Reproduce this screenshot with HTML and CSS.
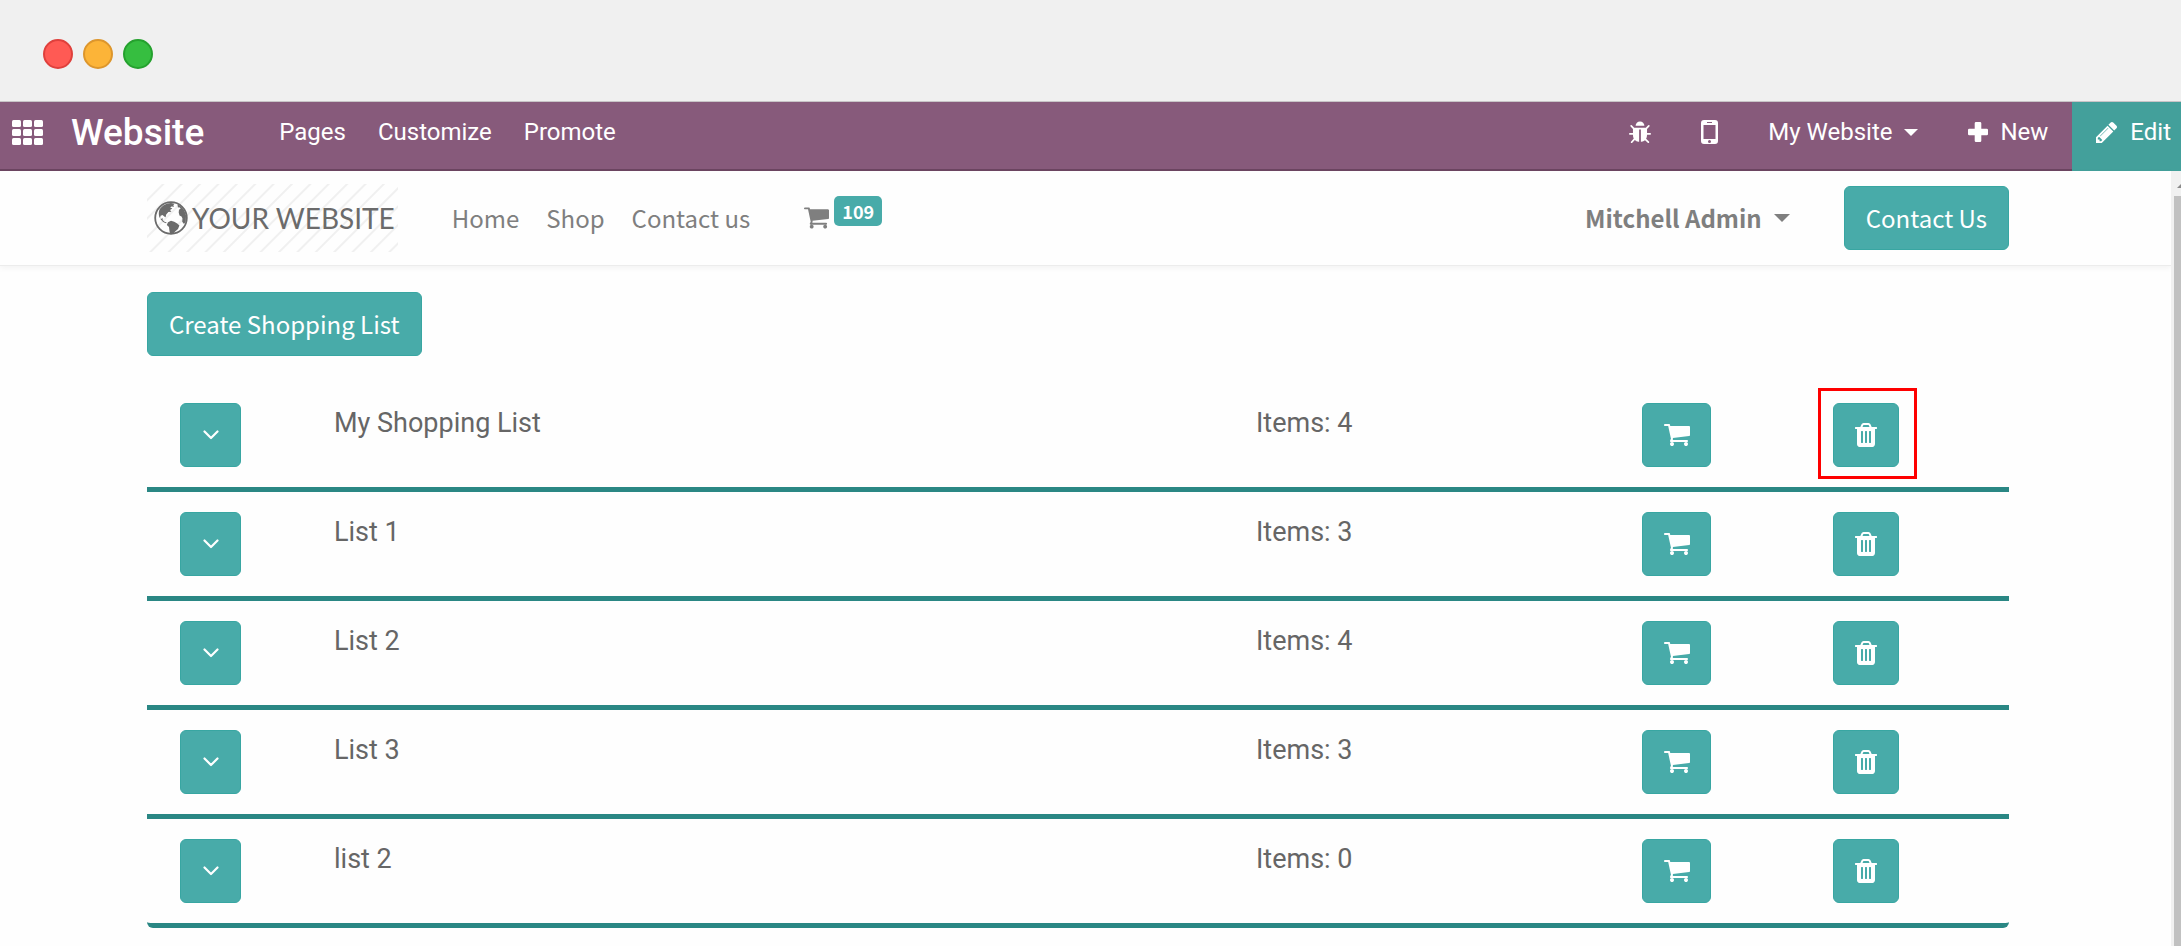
FILE: index.html
```
<!DOCTYPE html>
<html lang="en">
<head>
<meta charset="utf-8">
<title>Shopping Lists | Your Website</title>
<link rel="stylesheet" href="styles.css">
</head>
<body>
<svg class="sprite" aria-hidden="true">
  <symbol id="cart" viewBox="64 256 1664 1408"><path d="M704 1536q0 52-38 90t-90 38-90-38-38-90 38-90 90-38 90 38 38 90zm896 0q0 52-38 90t-90 38-90-38-38-90 38-90 90-38 90 38 38 90zm128-1088v512q0 24-16.5 42.5t-40.5 21.5l-1044 122q13 60 13 70 0 16-24 64h920q26 0 45 19t19 45-19 45-45 19h-1024q-26 0-45-19t-19-45q0-11 8-31.5t16-36 21.5-40 15.5-29.5l-177-823h-204q-26 0-45-19t-19-45 19-45 45-19h256q16 0 28.5 6.5t19.5 15.5 13 24.5 8 26 5.5 29.5 4.5 26h1201q26 0 45 19t19 45z"/></symbol>
  <symbol id="trash" viewBox="192 128 1408 1536"><path d="M704 1376v-704q0-14-9-23t-23-9h-64q-14 0-23 9t-9 23v704q0 14 9 23t23 9h64q14 0 23-9t9-23zm256 0v-704q0-14-9-23t-23-9h-64q-14 0-23 9t-9 23v704q0 14 9 23t23 9h64q14 0 23-9t9-23zm256 0v-704q0-14-9-23t-23-9h-64q-14 0-23 9t-9 23v704q0 14 9 23t23 9h64q14 0 23-9t9-23zm-544-992h448l-48-117q-7-9-17-11h-317q-10 2-17 11zm928 32v64q0 14-9 23t-23 9h-96v948q0 83-47 143.5t-113 60.5h-832q-66 0-113-58.5t-47-141.5v-952h-96q-14 0-23-9t-9-23v-64q0-14 9-23t23-9h309l70-167q15-37 54-63t79-26h320q40 0 79 26t54 63l70 167h309q14 0 23 9t9 23z"/></symbol>
  <symbol id="chevron" viewBox="0 0 16 10"><path d="M1.500 1.500L8 8l6.500-6.500" fill="none" stroke="currentColor" stroke-width="2.200" stroke-linecap="round" stroke-linejoin="round"/></symbol>
  <symbol id="caret" viewBox="0 0 16 8"><path d="M0 0h16L8 8z"/></symbol>
</svg>

<div class="titlebar">
  <span class="dot dot-close"></span>
  <span class="dot dot-min"></span>
  <span class="dot dot-max"></span>
</div>

<nav class="topbar" aria-label="Editor">
  <a class="apps" href="#" aria-label="Applications">
    <svg width="31" height="25" viewBox="0 0 31 25"><g fill="currentColor"><rect width="9" height="7" rx="1.500"/><rect x="11" width="9" height="7" rx="1.500"/><rect x="22" width="9" height="7" rx="1.500"/><rect y="9" width="9" height="7" rx="1.500"/><rect x="11" y="9" width="9" height="7" rx="1.500"/><rect x="22" y="9" width="9" height="7" rx="1.500"/><rect y="18" width="9" height="7" rx="1.500"/><rect x="11" y="18" width="9" height="7" rx="1.500"/><rect x="22" y="18" width="9" height="7" rx="1.500"/></g></svg>
  </a>
  <a class="app-name" href="#">Website</a>
  <div class="menu">
    <button type="button">Pages</button>
    <button type="button">Customize</button>
    <button type="button">Promote</button>
  </div>
  <div class="tools">
    <button type="button" aria-label="Debug"><svg width="22" height="23" viewBox="96 32 1600 1664" preserveAspectRatio="none"><path d="M1696 960q0 26-19 45t-45 19h-224q0 171-67 290l208 209q19 19 19 45t-19 45q-18 19-45 19t-45-19l-198-197q-5 5-15 13t-42 28.500-65 36.500-82 29-97 13v-896h-128v896q-51 0-101.500-13.500t-87-33-66-39-43.500-32.500l-15-14-183 207q-20 21-48 21-24 0-43-16-19-18-20.500-44.500t15.500-46.500l202-227q-58-114-58-274h-224q-26 0-45-19t-19-45 19-45 45-19h224v-294l-173-173q-19-19-19-45t19-45 45-19 45 19l173 173h844l173-173q19-19 45-19t45 19 19 45-19 45l-173 173v294h224q26 0 45 19t19 45zm-480-576h-640q0-133 93.500-226.500t226.500-93.500 226.500 93.500 93.500 226.500z"/></svg></button>
    <button type="button" aria-label="Mobile preview"><svg width="17" height="24" viewBox="0 0 17 24"><path fill-rule="evenodd" d="M3 0h11a3 3 0 0 1 3 3v18a3 3 0 0 1-3 3H3a3 3 0 0 1-3-3V3a3 3 0 0 1 3-3zM2.500 5v14h12V5zM6 2v1h5V2zM8.500 20a1.500 1.500 0 1 0 0 3 1.500 1.500 0 0 0 0-3z"/></svg></button>
    <button type="button">My Website<svg class="caret" width="14" height="7"><use href="#caret"/></svg></button>
    <button type="button" class="new"><svg width="20" height="20" viewBox="0 0 20 20"><path d="M8 0h4q1.300 0 1.300 1.300v5.400h5.400q1.300 0 1.300 1.300v4q0 1.300-1.300 1.300h-5.400v5.400q0 1.300-1.300 1.300H8q-1.300 0-1.300-1.300v-5.400H1.300Q0 13.300 0 12V8q0-1.300 1.300-1.300h5.400V1.300Q6.700 0 8 0z"/></svg>New</button>
  </div>
  <button type="button" class="edit"><svg width="21" height="21" viewBox="128 149 1515 1515"><path d="M491 1536l91-91-235-235-91 91v107h128v128h107zm523-928q0-22-22-22-10 0-17 7l-542 542q-7 7-7 17 0 22 22 22 10 0 17-7l542-542q7-7 7-17zm-54-192l416 416-832 832h-416v-416zm683 96q0 53-37 90l-166 166-416-416 166-165q36-38 90-38 53 0 91 38l235 234q37 39 37 91z"/></svg>Edit</button>
</nav>

<div class="viewport">
  <div class="page">
    <header class="site-header">
      <a class="logo" href="#">
        <svg width="34" height="34" viewBox="0 0 34 34"><circle cx="17" cy="17" r="15.800" fill="none" stroke="currentColor" stroke-width="1.800"/><path d="M5.500 8.500C8.500 4 12.500 2.300 17 2l3.500.8-1.200 1.400.8 1.600-2.600-.4-1.300 1 2.200 1.200-2.400 1.500 1.400 1.600-3 .4-2.200 2.500-.6 2.600-1.400-.8-1.600-1.300-2 .7-.6 2.700 1.600.2.900-1 .2 2.500 2.200 1.700 1.600.4-.4.900C8.500 21.500 6.500 18 5.300 16c-.6-2.500-.8-5 .2-7.500z"/><path d="M14 21.200l3-1.400 3.200 1 3 1.700 2.200 2-1.400 3.500-2.600 2.200-1.900 2-3.500.4-.6-3.200-.4-3.300-2.200-2.200z"/><path d="M23.500 3.500c4.500 2 7.500 6 8.500 11l-.2 6-1.800 2.500-1.800-2.200.3-3.300-1-2-2-1-.8-3 .3-2.700 1.700-1.200-1.400-1.400-1.300.2z"/></svg>
        <span>YOUR WEBSITE</span>
      </a>
      <nav class="site-nav" aria-label="Main">
        <a href="#">Home</a>
        <a href="#">Shop</a>
        <a href="#">Contact us</a>
      </nav>
      <a class="cart-link" href="#" aria-label="Cart, 109 items"><svg width="25" height="22"><use href="#cart"/></svg><span class="badge">109</span></a>
      <button type="button" class="user">Mitchell Admin<svg class="caret" width="16" height="8"><use href="#caret"/></svg></button>
      <a class="btn" href="#">Contact Us</a>
    </header>

    <main class="content">
      <button type="button" class="btn">Create Shopping List</button>
      <ul class="lists">
        <li class="row">
          <div><button type="button" class="btn btn-toggle" aria-label="Expand"><svg width="16" height="10"><use href="#chevron"/></svg></button></div>
          <span class="cell">My Shopping List</span><span class="cell">Items: 4</span>
          <div><button type="button" class="btn btn-cart" aria-label="Add to cart"><svg width="26" height="22"><use href="#cart"/></svg></button></div>
          <div><button type="button" class="btn btn-trash marked" aria-label="Delete"><svg width="22" height="24"><use href="#trash"/></svg></button></div>
        </li>
        <li class="row">
          <div><button type="button" class="btn btn-toggle" aria-label="Expand"><svg width="16" height="10"><use href="#chevron"/></svg></button></div>
          <span class="cell">List 1</span><span class="cell">Items: 3</span>
          <div><button type="button" class="btn btn-cart" aria-label="Add to cart"><svg width="26" height="22"><use href="#cart"/></svg></button></div>
          <div><button type="button" class="btn btn-trash" aria-label="Delete"><svg width="22" height="24"><use href="#trash"/></svg></button></div>
        </li>
        <li class="row">
          <div><button type="button" class="btn btn-toggle" aria-label="Expand"><svg width="16" height="10"><use href="#chevron"/></svg></button></div>
          <span class="cell">List 2</span><span class="cell">Items: 4</span>
          <div><button type="button" class="btn btn-cart" aria-label="Add to cart"><svg width="26" height="22"><use href="#cart"/></svg></button></div>
          <div><button type="button" class="btn btn-trash" aria-label="Delete"><svg width="22" height="24"><use href="#trash"/></svg></button></div>
        </li>
        <li class="row">
          <div><button type="button" class="btn btn-toggle" aria-label="Expand"><svg width="16" height="10"><use href="#chevron"/></svg></button></div>
          <span class="cell">List 3</span><span class="cell">Items: 3</span>
          <div><button type="button" class="btn btn-cart" aria-label="Add to cart"><svg width="26" height="22"><use href="#cart"/></svg></button></div>
          <div><button type="button" class="btn btn-trash" aria-label="Delete"><svg width="22" height="24"><use href="#trash"/></svg></button></div>
        </li>
        <li class="row">
          <div><button type="button" class="btn btn-toggle" aria-label="Expand"><svg width="16" height="10"><use href="#chevron"/></svg></button></div>
          <span class="cell">list 2</span><span class="cell">Items: 0</span>
          <div><button type="button" class="btn btn-cart" aria-label="Add to cart"><svg width="26" height="22"><use href="#cart"/></svg></button></div>
          <div><button type="button" class="btn btn-trash" aria-label="Delete"><svg width="22" height="24"><use href="#trash"/></svg></button></div>
        </li>
      </ul>
    </main>
  </div>
  <div class="scrollbar" aria-hidden="true">
    <svg width="10" height="25" viewBox="0 0 10 25"><path d="M6 17l6-6v6z" fill="#8a8a8a"/></svg>
    <div class="thumb"></div>
  </div>
</div>
</body>
</html>
```

FILE: styles.css
```
* { box-sizing: border-box; }

body {
  margin: 0;
  min-height: 100vh;
  display: flex;
  flex-direction: column;
  background: #fefefe;
  color: #666;
  font-family: Roboto, "Liberation Sans", sans-serif;
  font-size: 24px;
}

a { color: inherit; text-decoration: none; }

button {
  padding: 0;
  border: 0;
  background: none;
  color: inherit;
  font: inherit;
  cursor: pointer;
}

svg { display: block; fill: currentColor; flex: none; }
.sprite { position: absolute; width: 0; height: 0; }

.titlebar {
  display: flex;
  align-items: center;
  gap: 10px;
  height: 102px;
  padding: 6px 43px 0;
  background: #f0f0f0;
  border-bottom: 1px solid #c8c4c7;
}
.dot { width: 30px; height: 30px; border-radius: 50%; border: 2px solid; }
.dot-close { background: #ff5a54; border-color: #df403c; }
.dot-min { background: #fcb438; border-color: #dd962c; }
.dot-max { background: #36be40; border-color: #25a12e; }

.topbar {
  display: flex;
  height: 69px;
  background: #875a7b;
  border-bottom: 2px solid #6c4561;
  color: #fff;
}
.topbar > * { display: flex; align-items: center; padding-bottom: 7px; }
.topbar .apps { padding-left: 12px; }
.app-name { margin-left: 28px; font-size: 37px; font-weight: 500; }
.menu { margin-left: 75px; gap: 32px; }
.tools { margin-left: auto; gap: 50px; }
.tools button, .topbar .edit { display: flex; align-items: center; }
.caret { margin-left: 12px; }
.new { gap: 12px; }
.topbar .edit {
  gap: 13px;
  margin: 0 0 -2px 24px;
  padding: 0 10px 9px 24px;
  background: #43a09b;
}

.viewport { display: flex; flex: 1; }
.page { flex: 1; min-width: 0; }
.scrollbar { display: flex; flex-direction: column; width: 10px; background: #f1f1f1; }
.thumb { flex: 1; margin-left: 3px; background: #c1c1c1; }

.site-header, .content { padding-left: 147px; padding-right: 162px; }
.site-header {
  display: flex;
  align-items: center;
  height: 95px;
  border-bottom: 1px solid #ececec;
  box-shadow: 0 2px 6px #0000000d;
  color: #7f7f7f;
}
.site-header, .btn { font-family: "Noto Sans CJK SC", "Noto Sans", sans-serif; line-height: 36px; }

.logo {
  display: flex;
  align-items: center;
  gap: 4px;
  height: 68px;
  padding: 0 3px 0 7px;
  background: repeating-linear-gradient(135deg, #fefefe 0 10px, #f0f0f0 11px 12px, #fefefe 13px);
  color: #6b6b6b;
  font-family: Lato, sans-serif;
  font-size: 28px;
}
.site-nav { display: flex; gap: 27px; margin-left: 54px; }
.cart-link { display: flex; align-items: center; gap: 5px; margin-left: 54px; }
.badge {
  margin-bottom: 14px;
  padding: 0 8px;
  border-radius: 5px;
  background: #48aba9;
  color: #fff;
  font-size: 18px;
  font-weight: 700;
  line-height: 30px;
}
.user { display: flex; align-items: center; margin: 0 54px 0 auto; font-weight: 700; }

.btn {
  display: inline-flex;
  align-items: center;
  justify-content: center;
  height: 64px;
  padding: 0 21px;
  border: 1px solid #38a6a2;
  border-radius: 6px;
  background: #48aba9;
  color: #fff;
}

.content { padding-top: 26px; }
.lists { margin: 27px 0 0; padding: 0; list-style: none; }
.row {
  display: grid;
  grid-template-columns: 154fr 922fr 386fr 191fr 176fr;
  align-items: start;
  padding: 20px 0 20px 33px;
  border-bottom: 5px solid #2a8784;
}
.row:last-child { border-radius: 0 0 6px 6px; }
.row > div { display: flex; }
.cell { font-size: 27px; line-height: 40px; }
.btn-toggle, .btn-cart, .btn-trash { padding: 0; }
.btn-toggle { width: 61px; }
.btn-cart { width: 69px; }
.btn-trash { width: 66px; }
.marked { position: relative; }
.marked::after {
  content: "";
  position: absolute;
  inset: -16px -19px -13px -16px;
  border: 3px solid #fe0000;
}
```
